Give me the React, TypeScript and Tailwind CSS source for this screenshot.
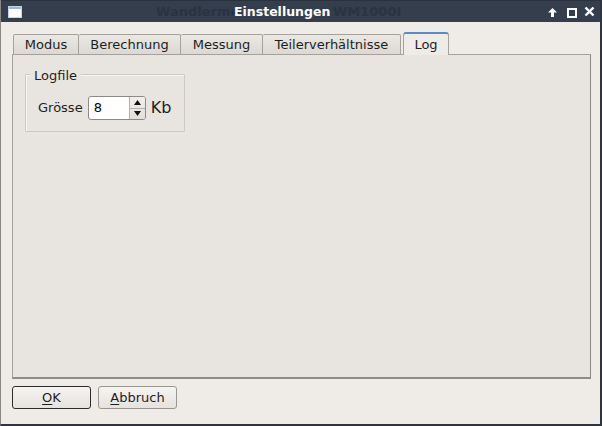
import React from "react";

const font = { fontFamily: '"DejaVu Sans", "Noto Sans", sans-serif' };

function TitleBar() {
  return (
    <div className="relative h-[22px] bg-[#343e4d] border-t border-[#2a323e] shrink-0 overflow-hidden">
      {/* window icon */}
      <div className="absolute left-[7px] top-[5px] w-[14px] h-[12px] bg-white border border-[#c8d4e4]">
        <div className="h-[2px] bg-[#9fb6d6]" />
      </div>
      {/* background window title, partly hidden behind the dialog title */}
      <div className="absolute left-[155px] top-[4px] leading-[14px] text-[13px] font-bold text-[#2a3340] whitespace-nowrap">
        Wandlerme
      </div>
      <div className="absolute left-[332px] top-[4px] leading-[14px] text-[13px] font-bold text-[#2a3340] whitespace-nowrap">
        WM1000I
      </div>
      <div className="absolute left-[233px] top-[4px] leading-[14px] text-[12.5px] font-bold text-white whitespace-nowrap">
        Einstellungen
      </div>
      {/* controls */}
      <svg className="absolute left-[546px] top-[6px]" width="11" height="11" viewBox="0 0 11 11">
        <path d="M5.5 1 L10 5.5 H7 V10 H4 V5.5 H1 Z" fill="white" />
      </svg>
      <div className="absolute left-[566px] top-[7px] w-[10px] h-[10px] border-2 border-white" />
      <svg className="absolute left-[583px] top-[5px]" width="11" height="11" viewBox="0 0 11 11">
        <path d="M1.5 1.5 L9.5 9.5 M9.5 1.5 L1.5 9.5" stroke="white" strokeWidth="2.4" />
      </svg>
    </div>
  );
}

const tabs = [
  { label: "Modus", w: "w-[66px]" },
  { label: "Berechnung", w: "w-[102px]" },
  { label: "Messung", w: "w-[82px]" },
  { label: "Teilerverhältnisse", w: "w-[138px]" },
];

function TabBar() {
  return (
    <div className="flex items-end h-[23px] pl-[12px]">
      {tabs.map((t, i) => (
        <div
          key={t.label}
          className={`${t.w} h-[20px] flex items-center justify-center text-[13px] text-[#1e1e1e] bg-gradient-to-b from-[#ebe8e4] to-[#dcd8d4] border-t border-r border-[#a5a19d] rounded-t-[2px] ${
            i === 0 ? "border-l" : ""
          }`}
        >
          {t.label}
        </div>
      ))}
      <div className="ml-[2px] w-[46px] h-[23px] flex items-center justify-center text-[13px] text-[#1e1e1e] bg-[#efece8] border-x border-[#a5a19d] border-t-2 border-t-[#5c8bc4] rounded-t-[3px] relative z-10 -mb-[1px] pt-[1px]">
        Log
      </div>
    </div>
  );
}

function SpinBox() {
  return (
    <div className="flex w-[58px] h-[24px] border border-[#8d8985] rounded-[3px] bg-white overflow-hidden">
      <div className="flex-1 flex items-center pl-[5px] text-[13px] text-black">8</div>
      <div className="w-[16px] flex flex-col border-l border-[#b5b1ad] bg-gradient-to-b from-[#f2f0ed] to-[#e2deda]">
        <div className="flex-1 flex items-center justify-center border-b border-[#b5b1ad]">
          <svg width="7" height="5" viewBox="0 0 7 5">
            <path d="M3.5 0 L7 5 H0 Z" fill="#111" />
          </svg>
        </div>
        <div className="flex-1 flex items-center justify-center">
          <svg width="7" height="5" viewBox="0 0 7 5">
            <path d="M0 0 H7 L3.5 5 Z" fill="#111" />
          </svg>
        </div>
      </div>
    </div>
  );
}

function Button({ hot, rest, isDefault }: { hot: string; rest: string; isDefault?: boolean }) {
  return (
    <div
      className={`w-[79px] h-[23px] flex items-center justify-center text-[13px] text-[#1e1e1e] rounded-[3px] bg-gradient-to-b from-[#f6f4f1] to-[#e6e2de] border ${
        isDefault ? "border-[#2c2c2c]" : "border-[#9a9692]"
      }`}
    >
      <span className="underline underline-offset-[2px]">{hot}</span>
      {rest}
    </div>
  );
}

export default function App() {
  return (
    <div
      style={font}
      className="w-[602px] h-[426px] flex flex-col bg-[#efebe7] border-l border-[#8a8784] border-r-2 border-r-[#2f3540] border-b-2 border-b-[#2f3540] overflow-hidden"
    >
      <TitleBar />
      <div className="pt-[9px]">
        <TabBar />
        <div className="ml-[11px] w-[579px] h-[325px] bg-[#e8e4e0] border border-[#a5a19d] border-r-[#8a8682] border-b-2 border-b-[#8f8b87] pt-[19px] pl-[12px]">
          <div className="relative w-[160px] h-[58px] border border-[#cdc9c5] shadow-[inset_1px_1px_0_#f7f5f3] rounded-[1px] pt-[10px] pl-[12px] flex items-center gap-[5px]">
            <div className="absolute left-[4px] -top-[9px] px-[4px] bg-[#e8e4e0] text-[13px] text-[#1e1e1e]">
              Logfile
            </div>
            <span className="text-[13px] text-[#1e1e1e]">Grösse</span>
            <SpinBox />
            <span className="text-[16px] text-[#1e1e1e]">Kb</span>
          </div>
        </div>
      </div>
      <div className="flex gap-[7px] pl-[11px] pt-[7px]">
        <Button hot="O" rest="K" isDefault />
        <Button hot="A" rest="bbruch" />
      </div>
    </div>
  );
}
